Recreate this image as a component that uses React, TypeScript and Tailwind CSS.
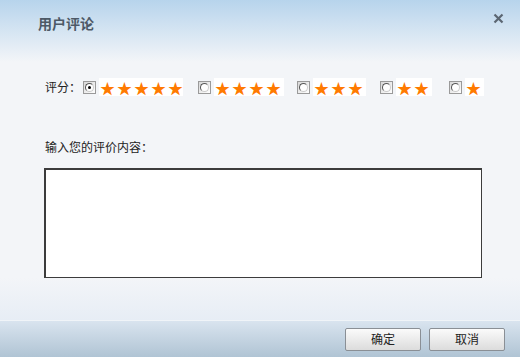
import { useState } from "react";

const font = { fontFamily: '"SimSun", "Noto Sans CJK SC", "Liberation Sans", sans-serif' };

const options = [
  { value: 5, ml: "ml-0", boxW: "w-[84px]" },
  { value: 4, ml: "ml-[15px]", boxW: "w-[70px]" },
  { value: 3, ml: "ml-[13px]", boxW: "w-[53px]" },
  { value: 2, ml: "ml-[14px]", boxW: "w-[36px]" },
  { value: 1, ml: "ml-[17px]", boxW: "w-[19px]" },
];

const Radio = ({ checked }: { checked: boolean }) => (
  <span className="flex h-[13px] w-[13px] items-center justify-center border border-[#9a9a9a] bg-gradient-to-br from-[#d8d8d8] to-[#ffffff]">
    <span className="flex h-[9px] w-[9px] items-center justify-center rounded-full border border-[#555] border-r-[#ccc] border-b-[#ccc] bg-white">
      {checked && <span className="h-[3px] w-[3px] rounded-full bg-black" />}
    </span>
  </span>
);

export default function App() {
  const [rating, setRating] = useState(5);
  const [text, setText] = useState("");

  return (
    <div className="flex h-[357px] w-[520px] flex-col bg-[#f3f5f8] text-[12px] text-[#222]" style={font}>
      {/* HEADER */}
      <div className="flex h-[62px] items-start justify-between bg-gradient-to-b from-[#b7d4ec] to-[#f3f5f8] pl-[38px] pr-[12px] pt-[13px]">
        <h3 className="text-[14px] font-bold text-[#4d5966]">用户评论</h3>
        <button className="mt-[-5px] flex h-[20px] w-[20px] items-center justify-center text-[#5b6672]">
          <svg width="11" height="11" viewBox="0 0 11 11">
            <path d="M1.5 1.5 L9.5 9.5 M9.5 1.5 L1.5 9.5" stroke="currentColor" strokeWidth="2.2" />
          </svg>
        </button>
      </div>

      {/* RATING */}
      <div className="mt-[16px] flex items-center pl-[45px]">
        <span className="w-[38px]">评分：</span>
        {options.map((o) => (
          <label key={o.value} className={`flex cursor-pointer items-center ${o.ml}`} onClick={() => setRating(o.value)}>
            <Radio checked={rating === o.value} />
            <span className={`ml-[3px] flex h-[18px] ${o.boxW} items-center bg-white pl-[1px] text-[15px] leading-none text-[#ff7a00]`}>
              {"★".repeat(o.value).split("").map((s, i) => (
                <span key={i} className="w-[17px] shrink-0">{s}</span>
              ))}
            </span>
          </label>
        ))}
      </div>

      {/* COMMENT */}
      <p className="mt-[42px] pl-[45px]">输入您的评价内容：</p>
      <div className="mt-[12px] pl-[44px]">
        <textarea
          value={text}
          onChange={(e) => setText(e.target.value)}
          className="block h-[110px] w-[438px] resize-none border border-[#3c3c3c] border-t-2 border-l-2 bg-white p-1 outline-none"
        />
      </div>

      <div className="flex-1 bg-gradient-to-b from-[#f3f5f8] to-[#e7edf5]" />

      {/* FOOTER */}
      <div className="flex h-[37px] items-center justify-end gap-[8px] border-t border-[#f0f4f8] bg-gradient-to-b from-[#d9e4ef] to-[#b0c4d4] pr-[15px]">
        <button className="h-[23px] w-[76px] rounded-[2px] border border-[#8a8f95] bg-gradient-to-b from-[#fbfbfb] to-[#dcdcdc] text-[12px] text-[#222]">确定</button>
        <button className="h-[23px] w-[76px] rounded-[2px] border border-[#8a8f95] bg-gradient-to-b from-[#fbfbfb] to-[#dcdcdc] text-[12px] text-[#222]">取消</button>
      </div>
    </div>
  );
}
